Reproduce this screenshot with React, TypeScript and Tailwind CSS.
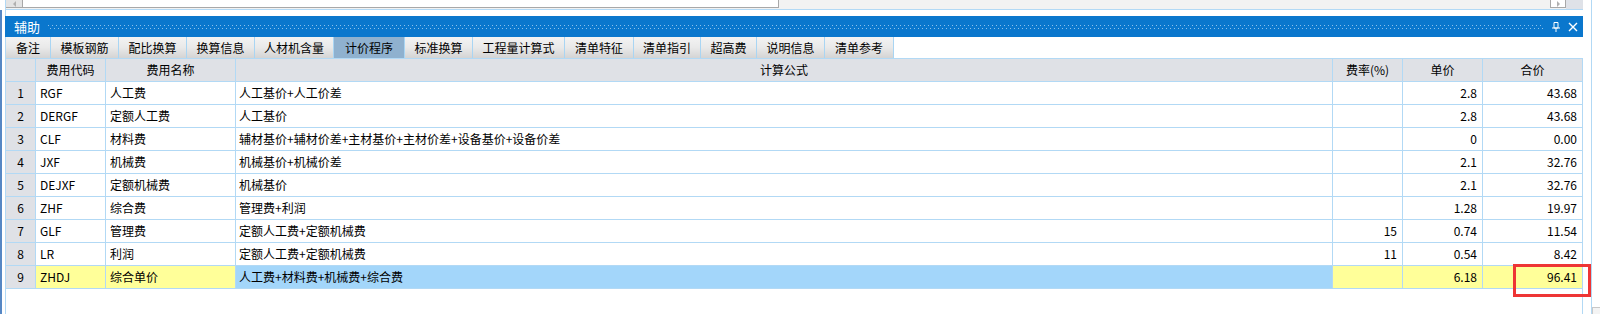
import React from 'react';

interface FeeRow {
  no: number;
  code: string;
  name: string;
  formula: string;
  rate: string;
  price: string;
  total: string;
}

const rows: FeeRow[] = [
  { no: 1, code: 'RGF', name: '人工费', formula: '人工基价+人工价差', rate: '', price: '2.8', total: '43.68' },
  { no: 2, code: 'DERGF', name: '定额人工费', formula: '人工基价', rate: '', price: '2.8', total: '43.68' },
  { no: 3, code: 'CLF', name: '材料费', formula: '辅材基价+辅材价差+主材基价+主材价差+设备基价+设备价差', rate: '', price: '0', total: '0.00' },
  { no: 4, code: 'JXF', name: '机械费', formula: '机械基价+机械价差', rate: '', price: '2.1', total: '32.76' },
  { no: 5, code: 'DEJXF', name: '定额机械费', formula: '机械基价', rate: '', price: '2.1', total: '32.76' },
  { no: 6, code: 'ZHF', name: '综合费', formula: '管理费+利润', rate: '', price: '1.28', total: '19.97' },
  { no: 7, code: 'GLF', name: '管理费', formula: '定额人工费+定额机械费', rate: '15', price: '0.74', total: '11.54' },
  { no: 8, code: 'LR', name: '利润', formula: '定额人工费+定额机械费', rate: '11', price: '0.54', total: '8.42' },
  { no: 9, code: 'ZHDJ', name: '综合单价', formula: '人工费+材料费+机械费+综合费', rate: '', price: '6.18', total: '96.41' },
];

const tabs: { label: string; w: string }[] = [
  { label: '备注', w: 'w-[45px]' },
  { label: '模板钢筋', w: 'w-[68px]' },
  { label: '配比换算', w: 'w-[68px]' },
  { label: '换算信息', w: 'w-[68px]' },
  { label: '人材机含量', w: 'w-[79px]' },
  { label: '计价程序', w: 'w-[71px]' },
  { label: '标准换算', w: 'w-[68px]' },
  { label: '工程量计算式', w: 'w-[92px]' },
  { label: '清单特征', w: 'w-[69px]' },
  { label: '清单指引', w: 'w-[67px]' },
  { label: '超高费', w: 'w-[56px]' },
  { label: '说明信息', w: 'w-[68px]' },
  { label: '清单参考', w: 'w-[69px]' },
];

const cell = 'border-r border-b border-[#b2d9f5] h-[23px] leading-[22px] whitespace-nowrap overflow-hidden';

export default function App() {
  return (
    <div className="relative w-[1600px] h-[314px] overflow-hidden bg-white flex text-[12px] text-black font-['Noto_Sans_CJK_SC','Noto_Sans',sans-serif]">
      {/* left edge */}
      <div className="w-[5px] flex flex-col shrink-0">
        <div className="h-[10px]" />
        <div className="flex-1 w-[2px] bg-[#5687c4]" />
      </div>

      {/* main panel */}
      <div className="w-[1578px] shrink-0 flex flex-col border-l border-[#b2d9f5]">
        {/* top strip left over from the pane above */}
        <div className="h-[10px] flex border-b border-[#b2d9f5] bg-[#f2f2f2]">
          <div className="w-[17px] h-[8px] bg-[#e4e4e4] border-r border-b border-[#a8a8a8] flex items-start justify-center">
            <span className="mt-[1px] w-0 h-0 border-y-[3px] border-y-transparent border-r-[3px] border-r-[#b0b0b0]" />
          </div>
          <div className="w-[756px] h-[8px] bg-white border-r border-b border-[#a8a8a8]" />
          <div className="flex-1" />
          <div className="w-[16px] h-[8px] bg-white border border-t-0 border-[#a8a8a8] flex items-start justify-center">
            <span className="mt-[1px] w-0 h-0 border-y-[3px] border-y-transparent border-l-[3px] border-l-[#b0b0b0]" />
          </div>
          <div className="w-[17px] bg-[#dfe2e8]" />
        </div>
        <div className="h-[6px]" />

        {/* title bar */}
        <div className="-ml-px h-[21px] bg-[#0a77cd] flex items-center text-white">
          <span className="pl-[9px] pr-[8px] text-[13px] leading-[21px]">辅助</span>
          <svg className="flex-1 h-[4px]" preserveAspectRatio="none">
            <defs>
              <pattern id="dots" width="4" height="4" patternUnits="userSpaceOnUse">
                <rect x="0" y="0" width="1" height="1" fill="#8cc0ec" />
                <rect x="2" y="3" width="1" height="1" fill="#8cc0ec" />
              </pattern>
            </defs>
            <rect width="100%" height="100%" fill="url(#dots)" />
          </svg>
          <svg width="10" height="10" viewBox="0 0 10 10" className="ml-[7px]">
            <path d="M3 0.5h4v5.5h-4z" fill="none" stroke="#fff" strokeWidth="1" />
            <path d="M1 6h8M5 6v4" stroke="#fff" strokeWidth="1" />
          </svg>
          <svg width="10" height="10" viewBox="0 0 10 10" className="ml-[7px] mr-[5px]">
            <path d="M1 1l8 8M9 1l-8 8" stroke="#fff" strokeWidth="1.4" />
          </svg>
        </div>

        {/* tabs */}
        <div className="h-[21px] flex">
          {tabs.map(t => (
            <div
              key={t.label}
              className={`${t.w} h-[21px] border-r border-[#a9d5f3] text-center leading-[21px] ${
                t.label === '计价程序'
                  ? 'bg-[#8fb1cf]'
                  : 'bg-gradient-to-b from-[#f3f3f3] via-[#e9e9e9] to-[#d4d4d4]'
              }`}
            >
              {t.label}
            </div>
          ))}
        </div>

        {/* grid */}
        <div className="grid grid-cols-[30px_70px_130px_1097px_70px_80px_100px] border-t border-[#b2d9f5]">
          <div className={`${cell} bg-[#dfe1e6]`} />
          <div className={`${cell} bg-[#dfe1e6] text-center`}>费用代码</div>
          <div className={`${cell} bg-[#dfe1e6] text-center`}>费用名称</div>
          <div className={`${cell} bg-[#dfe1e6] text-center`}>计算公式</div>
          <div className={`${cell} bg-[#dfe1e6] text-center`}>费率(%)</div>
          <div className={`${cell} bg-[#dfe1e6] text-center`}>单价</div>
          <div className={`${cell} bg-[#dfe1e6] text-center`}>合价</div>

          {rows.map(r => {
            const sel = r.no === 9;
            const yellow = sel ? 'bg-[#ffff99]' : 'bg-white';
            return (
              <React.Fragment key={r.no}>
                <div className={`${cell} bg-[#dfe1e6] text-center`}>{r.no}</div>
                <div className={`${cell} ${yellow} pl-[4px]`}>{r.code}</div>
                <div className={`${cell} ${yellow} pl-[4px]`}>{r.name}</div>
                <div className={`${cell} ${sel ? 'bg-[#a3d6fa]' : 'bg-white'} pl-[3px]`}>{r.formula}</div>
                <div className={`${cell} ${yellow} text-right pr-[5px]`}>{r.rate}</div>
                <div className={`${cell} ${yellow} text-right pr-[5px]`}>{r.price}</div>
                <div className={`${cell} ${yellow} text-right pr-[5px]`}>{r.total}</div>
              </React.Fragment>
            );
          })}
        </div>
        <div className="flex-1 border-r border-[#b2d9f5]" />
      </div>

      {/* right edge */}
      <div className="flex-1 flex">
        <div className="w-[8px]" />
        <div className="w-px bg-[#b2d9f5]" />
        <div className="flex-1 flex flex-col justify-end">
          <div className="h-[7px] border-l border-t border-[#c8c8c8] bg-[#f4f4f4]" />
        </div>
      </div>

      {/* red highlight box around the result */}
      <div className="absolute left-[1513px] top-[264px] w-[78px] h-[33px] border-[3px] border-[#ee3535]" />
    </div>
  );
}
